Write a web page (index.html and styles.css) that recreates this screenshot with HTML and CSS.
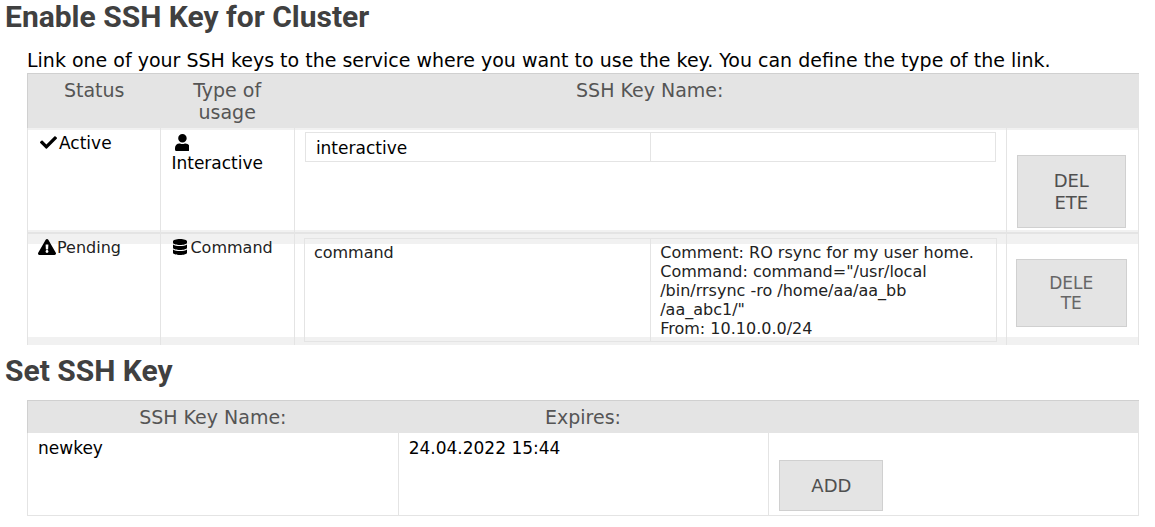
FILE: index.html
```html
<!DOCTYPE html>
<html lang="en">
<head>
<meta charset="utf-8">
<title>SSH Keys</title>
<link rel="stylesheet" href="styles.css">
</head>
<body>
<main class="page">
  <section>
    <h2 class="title">Enable SSH Key for Cluster</h2>
    <div class="content">
      <p class="intro">Link one of your SSH keys to the service where you want to use the key. You can define the type of the link.</p>
      <table class="grid">
        <colgroup><col class="narrow"><col class="narrow"><col class="wide"><col></colgroup>
        <thead>
          <tr><th scope="col">Status</th><th scope="col">Type of usage</th><th scope="col">SSH Key Name:</th><td></td></tr>
        </thead>
        <tbody>
          <tr class="active">
            <td><span class="icon"><svg viewBox="0 0 512 512" aria-hidden="true"><path d="M173.9 439.4 7.5 273c-10-10-10-26.200 0-36.200l36.200-36.200c10-10 26.200-10 36.200 0L192 312.700 432.100 72.600c10-10 26.200-10 36.200 0l36.200 36.200c10 10 10 26.200 0 36.200L210.100 439.400c-10 10-26.200 10-36.200 0z"/></svg></span>Active</td>
            <td><span class="icon"><svg viewBox="0 0 448 512" aria-hidden="true"><path d="M224 256c70.700 0 128-57.300 128-128S294.700 0 224 0 96 57.300 96 128s57.300 128 128 128zm89.600 32h-16.700c-22.200 10.200-46.900 16-72.900 16s-50.600-5.800-72.900-16h-16.700C60.200 288 0 348.200 0 422.400V464c0 26.500 21.500 48 48 48h352c26.500 0 48-21.500 48-48v-41.600c0-74.200-60.200-134.400-134.400-134.400z"/></svg></span>Interactive</td>
            <td>
              <table class="key"><tbody><tr><td>interactive</td><td></td></tr></tbody></table>
            </td>
            <td><button type="button" class="button">DELETE</button></td>
          </tr>
          <tr class="pending">
            <td><span class="icon"><svg viewBox="0 0 576 512" aria-hidden="true"><path d="M569.500 440c18.500 32-4.700 72-41.600 72H48.100c-36.900 0-60-40.100-41.600-72L246.400 24c18.500-32 64.700-32 83.200 0l239.900 416zM288 354c-25.400 0-46 20.600-46 46s20.600 46 46 46 46-20.600 46-46-20.600-46-46-46zm-43.700-165.300 7.400 136c.3 6.400 5.600 11.300 12 11.300h48.500c6.400 0 11.600-5 12-11.300l7.400-136c.4-6.900-5.100-12.700-12-12.700h-63.400c-6.900 0-12.300 5.800-12 12.700z"/></svg></span>Pending</td>
            <td><span class="icon"><svg viewBox="0 0 448 512" aria-hidden="true"><path d="M448 73v46c0 40-100 73-224 73S0 159 0 119V73C0 33 100 0 224 0s224 33 224 73zm0 103v103c0 40-100 73-224 73S0 319 0 279V176c48 33 136 48 224 48s176-15 224-48zm0 160v103c0 40-100 73-224 73S0 479 0 439V336c48 33 136 48 224 48s176-15 224-48z"/></svg></span>Command</td>
            <td>
              <table class="key"><tbody><tr><td>command</td><td>Comment: RO rsync for my user home.<br>Command: command="/usr/local<br>/bin/rrsync -ro /home/aa/aa_bb<br>/aa_abc1/"<br>From: 10.10.0.0/24</td></tr></tbody></table>
            </td>
            <td><button type="button" class="button">DELETE</button></td>
          </tr>
        </tbody>
      </table>
    </div>
  </section>
  <section>
    <h2 class="title title-next">Set SSH Key</h2>
    <div class="content">
      <table class="grid">
        <thead>
          <tr><th scope="col">SSH Key Name:</th><th scope="col">Expires:</th><td></td></tr>
        </thead>
        <tbody>
          <tr><td>newkey</td><td>24.04.2022 15:44</td><td><button type="button" class="button">ADD</button></td></tr>
        </tbody>
      </table>
    </div>
  </section>
</main>
</body>
</html>
```
FILE: styles.css
```css
* { box-sizing: border-box; }

body {
  margin: 0;
  background: #fff;
  color: #000;
  font-family: Verdana, "DejaVu Sans", sans-serif;
  font-size: 17px;
  line-height: 20px;
}

.page { padding: 0 16px 11px 5px; }

.title {
  margin: 0;
  color: #404040;
  font: bold 30px/34px Roboto, sans-serif;
}
.title-next { padding: 9px 0 12px; }

.content { padding-left: 22px; }

.intro {
  margin: 0;
  padding: 14px 0 1px;
  font-size: 19px;
  line-height: 24px;
}

table {
  width: 100%;
  table-layout: fixed;
  border-collapse: separate;
  border-spacing: 0;
}

td, th { vertical-align: top; }

.narrow { width: 12%; }
.wide { width: 64%; }

.grid > thead > tr > * {
  padding: 5px 10px;
  border-top: 1px solid #d0d0d0;
  background: #e4e4e4;
  color: #555;
  font-size: 19px;
  font-weight: normal;
  line-height: 22px;
  text-align: center;
}
.grid > thead > tr > :first-child { border-left: 1px solid #d0d0d0; }

.grid > tbody > tr > td {
  padding: 5px 10px 4px;
  border-left: 1px solid #e4e4e4;
}
.grid > tbody > tr > td:last-child {
  padding-right: 12px;
  border-right: 1px solid #e4e4e4;
}
.grid > tbody > tr:last-child:not(.pending) > td { border-bottom: 1px solid #e4e4e4; }

.active > td {
  background: linear-gradient(#f1f1f1 2px, #fff 2px, #fff calc(100% - 2px), #f1f1f1 calc(100% - 2px));
}

.grid > tbody > .pending > td {
  padding: 4px 9px 3px;
  border-top: 2px solid #e4e4e4;
  background: linear-gradient(#f1f1f1 10px, #fff 10px, #fff calc(100% - 8px), #f1f1f1 calc(100% - 8px));
  color: #222;
  font-size: 16px;
  line-height: 19px;
}
.grid > tbody > .pending > td:last-child { padding-right: 11px; }

.key {
  margin-top: -1px;
  border: 1px solid #e4e4e4;
  font-size: inherit;
}
.key td { padding: 5px 10px 3px; }
.key td + td { border-left: 1px solid #e4e4e4; }
.pending .key { margin-top: 0; }
.pending .key td { padding: 4px 9px 3px; }

.icon {
  display: inline-block;
  width: 21px;
  text-align: center;
}
.icon svg {
  height: 17px;
  color: #000;
  fill: currentColor;
  vertical-align: -2px;
}
.pending .icon { width: 20px; }
.pending .icon svg { height: 16px; }

.button {
  display: block;
  max-width: 100%;
  margin: 22px 0 0;
  padding: 14px 31px 13px;
  border: 1px solid #d0d0d0;
  background: #e4e4e4;
  color: #505050;
  font: 18px/22px Verdana, "DejaVu Sans", sans-serif;
  word-break: break-all;
}
.pending .button {
  margin-top: 21px;
  padding: 13px 31px;
  color: #666;
  font-size: 17px;
  line-height: 20px;
}
```
